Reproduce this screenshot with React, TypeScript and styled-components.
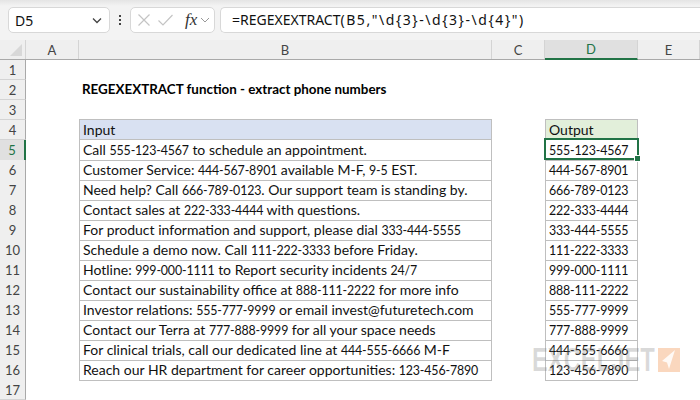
import React from "react";
import styled, { createGlobalStyle } from "styled-components";

const GlobalStyle = createGlobalStyle`
  html, body {
    margin: 0;
    padding: 0;
    background: #fff;
  }
`;

const COLUMNS = "26px 53px 413px 53px 93px 62px";

const rows: [string, string][] = [
  ["Call 555-123-4567 to schedule an appointment.", "555-123-4567"],
  ["Customer Service: 444-567-8901 available M-F, 9-5 EST.", "444-567-8901"],
  ["Need help? Call 666-789-0123. Our support team is standing by.", "666-789-0123"],
  ["Contact sales at 222-333-4444 with questions.", "222-333-4444"],
  ["For product information and support, please dial 333-444-5555", "333-444-5555"],
  ["Schedule a demo now. Call 111-222-3333 before Friday.", "111-222-3333"],
  ["Hotline: 999-000-1111 to Report security incidents 24/7", "999-000-1111"],
  ["Contact our sustainability office at 888-111-2222 for more info", "888-111-2222"],
  ["Investor relations: 555-777-9999 or email invest@futuretech.com", "555-777-9999"],
  ["Contact our Terra at 777-888-9999 for all your space needs", "777-888-9999"],
  ["For clinical trials, call our dedicated line at 444-555-6666 M-F", "444-555-6666"],
  ["Reach our HR department for career opportunities: 123-456-7890", "123-456-7890"],
];

const Page = styled.div`
  position: relative;
  width: 700px;
  height: 400px;
  overflow: hidden;
  background: #fff;
  font-family: Lato, "Liberation Sans", sans-serif;
  color: #111;
`;

const FormulaBar = styled.div`
  display: flex;
  align-items: center;
  height: 40px;
  padding: 0 0 0 8px;
  box-sizing: border-box;
  background: linear-gradient(#e4e4e4 0, #f3f3f3 6px);
`;

const NameBox = styled.div`
  display: flex;
  align-items: center;
  justify-content: space-between;
  width: 102px;
  height: 26px;
  padding: 0 6px 0 6px;
  box-sizing: border-box;
  background: #fff;
  border: 1px solid #d8d8d8;
  border-radius: 5px;
  font-family: "Noto Sans", sans-serif;
  font-size: 14px;
`;

const Dots = styled.div`
  display: flex;
  flex-direction: column;
  align-items: center;
  gap: 2px;
  width: 20px;
  flex: none;
`;

const Dot = styled.span`
  width: 2px;
  height: 2px;
  background: #444;
`;

const ActionBox = styled.div`
  display: flex;
  align-items: center;
  width: 85px;
  height: 26px;
  padding-left: 6px;
  gap: 6px;
  box-sizing: border-box;
  background: #fff;
  border: 1px solid #d8d8d8;
  border-radius: 5px;
`;

const FxLabel = styled.span`
  margin-left: 5px;
  margin-right: -3px;
  font-family: "Liberation Serif", serif;
  font-style: italic;
  font-size: 17px;
  color: #333;
`;

const FormulaInput = styled.div`
  flex: 1;
  height: 26px;
  margin-left: 5px;
  padding-left: 11px;
  box-sizing: border-box;
  background: #fff;
  border: 1px solid #d8d8d8;
  border-right: none;
  border-radius: 5px 0 0 5px;
  font-family: "Noto Sans", sans-serif;
  font-size: 14px;
  line-height: 24px;
  white-space: nowrap;
`;

const FormulaArgs = styled.span`
  letter-spacing: 1.55px;
`;

const HeaderRow = styled.div`
  display: grid;
  grid-template-columns: ${COLUMNS};
  height: 20px;
  background: #efefef;
  border-bottom: 1px solid #a9a9a9;
  box-sizing: border-box;
`;

const Corner = styled.div`
  display: flex;
  align-items: flex-end;
  justify-content: flex-end;
  padding: 0 3px 3px 0;
  border-right: 1px solid #d4d4d4;
`;

const ColumnHead = styled.div<{ $active?: boolean }>`
  display: flex;
  align-items: center;
  justify-content: center;
  margin-bottom: ${(p) => (p.$active ? "-1px" : "0")};
  border-right: 1px solid #d4d4d4;
  background: ${(p) => (p.$active ? "#e0e0e0" : "transparent")};
  border-bottom: ${(p) => (p.$active ? "2px solid #217346" : "none")};
  color: ${(p) => (p.$active ? "#217346" : "#444")};
  font-size: 13px;
`;

const Sheet = styled.div`
  display: flex;
  flex-direction: column;
`;

const SheetRow = styled.div`
  display: grid;
  grid-template-columns: ${COLUMNS};
  height: 20px;
  flex: none;
`;

const RowHead = styled.div<{ $active?: boolean }>`
  display: flex;
  align-items: center;
  justify-content: center;
  box-sizing: border-box;
  background: ${(p) => (p.$active ? "#e0e0e0" : "#efefef")};
  border-right: ${(p) => (p.$active ? "2px solid #217346" : "1px solid #a9a9a9")};
  border-bottom: 1px solid #d4d4d4;
  color: ${(p) => (p.$active ? "#217346" : "#444")};
  font-size: 13px;
`;

const Cell = styled.div<{ $fill?: string; $boxed?: boolean; $bold?: boolean }>`
  display: block;
  box-sizing: border-box;
  min-width: 0;
  padding-left: 3px;
  white-space: nowrap;
  font-size: ${(p) => (p.$bold ? "13.4px" : "14px")};
  line-height: 19px;
  font-weight: ${(p) => (p.$bold ? 700 : 400)};
  color: ${(p) => (p.$bold ? "#000" : "#111")};
  background: ${(p) => p.$fill ?? "transparent"};
  ${(p) =>
    p.$boxed
      ? `border: 1px solid #bfbfbf;
         border-top: none;`
      : ""}
`;

const TopCell = styled(Cell)`
  height: 21px;
  margin-top: -1px;
  border-top: 1px solid #bfbfbf;
`;

// Lato's figures are much wider than the sheet font's, so they get a smaller size
const Figures = styled.span`
  font-size: 12.4px;
  letter-spacing: -0.15px;
`;

const Selection = styled.div`
  position: absolute;
  left: 544px;
  top: 138px;
  width: 95px;
  height: 22px;
  box-sizing: border-box;
  border: 2px solid #217346;
`;

const Handle = styled.div`
  position: absolute;
  right: -4px;
  bottom: -4px;
  width: 5px;
  height: 5px;
  background: #217346;
  border: 1px solid #fff;
`;

const Watermark = styled.div`
  position: absolute;
  left: 532px;
  top: 348px;
  display: flex;
  gap: 3px;
  pointer-events: none;
`;

const WatermarkText = styled.span`
  width: 123px;
  height: 24px;
  white-space: nowrap;
  font-family: "Liberation Sans", sans-serif;
  font-weight: 700;
  font-size: 33px;
  line-height: 24px;
  color: rgba(120, 120, 120, 0.28);
  transform-origin: left center;
  transform: scaleX(0.72);
`;

const WatermarkBadge = styled.span`
  display: flex;
  width: 22px;
  height: 24px;
  background: rgba(240, 140, 70, 0.35);
`;

const Chevron = () => (
  <svg width="12" height="12" viewBox="0 0 12 12" fill="none">
    <path d="M2 4.5 6 8.5 10 4.5" stroke="#444" strokeWidth="1.3" />
  </svg>
);

const Cross = () => (
  <svg width="14" height="14" viewBox="0 0 14 14" fill="none">
    <path d="M1.5 1.5 12.5 12.5M12.5 1.5 1.5 12.5" stroke="#c4c4c4" strokeWidth="1.2" />
  </svg>
);

const Check = () => (
  <svg width="17" height="14" viewBox="0 0 17 14" fill="none">
    <path d="M1.5 7.5 6 12 15.5 2" stroke="#c4c4c4" strokeWidth="1.2" />
  </svg>
);

const withFigures = (text: string) =>
  text.split(/(\d[\d/-]*)/).map((part, i) =>
    i % 2 ? <Figures key={i}>{part}</Figures> : part
  );

const App = () => (
  <Page>
    <GlobalStyle />
    <FormulaBar>
      <NameBox>
        D5
        <Chevron />
      </NameBox>
      <Dots>
        <Dot />
        <Dot />
        <Dot />
      </Dots>
      <ActionBox>
        <Cross />
        <Check />
        <FxLabel>fx</FxLabel>
        <svg width="10" height="10" viewBox="0 0 10 10" fill="none">
          <path d="M1 3 5 7 9 3" stroke="#999" strokeWidth="1" />
        </svg>
      </ActionBox>
      <FormulaInput>
        =REGEXEXTRACT
        <FormulaArgs>{'(B5,"\\d{3}-\\d{3}-\\d{4}")'}</FormulaArgs>
      </FormulaInput>
    </FormulaBar>
    <HeaderRow>
      <Corner>
        <svg width="12" height="12" viewBox="0 0 12 12">
          <path d="M12 0V12H0Z" fill="#d8d8d8" />
        </svg>
      </Corner>
      <ColumnHead>A</ColumnHead>
      <ColumnHead>B</ColumnHead>
      <ColumnHead>C</ColumnHead>
      <ColumnHead $active>D</ColumnHead>
      <ColumnHead>E</ColumnHead>
    </HeaderRow>
    <Sheet>
      <SheetRow>
        <RowHead>1</RowHead>
      </SheetRow>
      <SheetRow>
        <RowHead>2</RowHead>
        <Cell />
        <Cell $bold>REGEXEXTRACT function - extract phone numbers</Cell>
      </SheetRow>
      <SheetRow>
        <RowHead>3</RowHead>
      </SheetRow>
      <SheetRow>
        <RowHead>4</RowHead>
        <Cell />
        <TopCell $boxed $fill="#d9e1f2">Input</TopCell>
        <Cell />
        <TopCell $boxed $fill="#e2efda">Output</TopCell>
      </SheetRow>
      {rows.map(([input, output], i) => (
        <SheetRow key={output}>
          <RowHead $active={i === 0}>{i + 5}</RowHead>
          <Cell />
          <Cell $boxed>{withFigures(input)}</Cell>
          <Cell />
          <Cell $boxed>{withFigures(output)}</Cell>
        </SheetRow>
      ))}
      <SheetRow>
        <RowHead>17</RowHead>
      </SheetRow>
    </Sheet>
    <Selection>
      <Handle />
    </Selection>
    <Watermark>
      <WatermarkText>EXCELJET</WatermarkText>
      <WatermarkBadge>
        <svg width="22" height="24" viewBox="0 0 22 24">
          <path d="M17 2 4 13 9 14.5 11 21Z" fill="#fff" fillOpacity="0.85" />
        </svg>
      </WatermarkBadge>
    </Watermark>
  </Page>
);

export default App;
